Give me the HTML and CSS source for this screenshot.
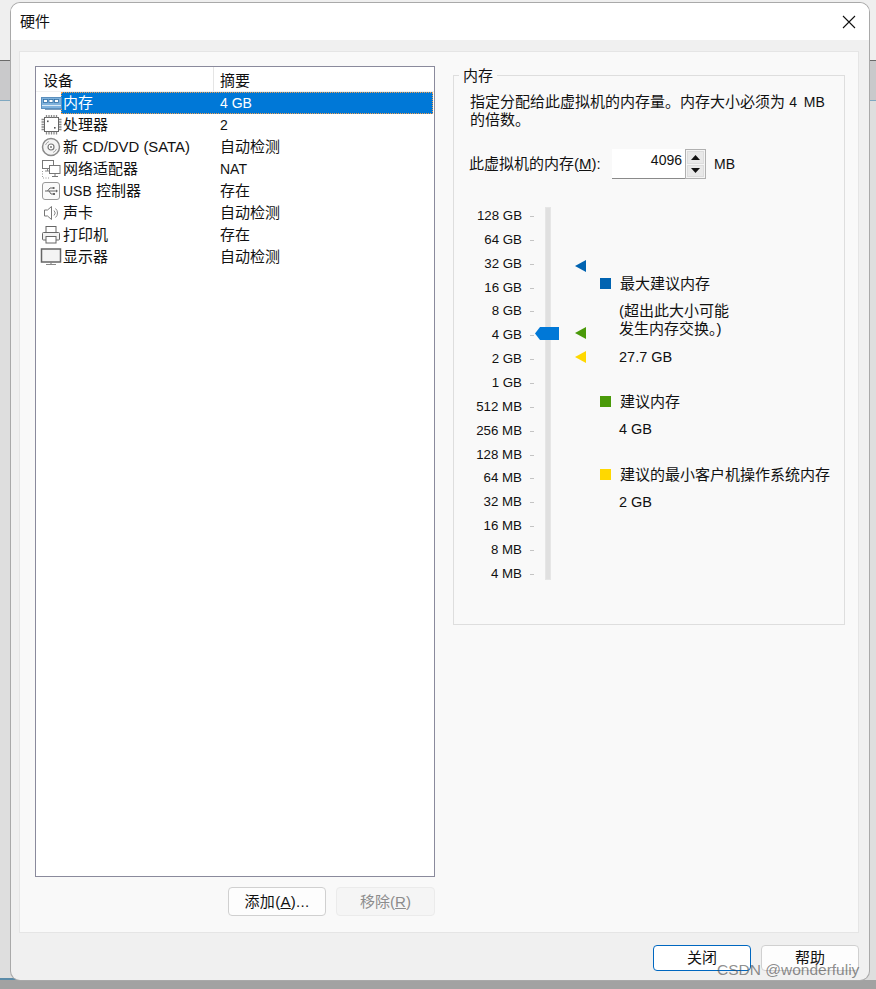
FILE: index.html
```html
<!DOCTYPE html>
<html lang="zh-CN">
<head>
<meta charset="utf-8">
<title>硬件</title>
<link rel="stylesheet" href="styles.css">
</head>
<body>
<div class="backdrop"><i class="bd-line-dark"></i><i class="bd-line-blue"></i><i class="bd-line-foot"></i><i class="bd-bottom"></i></div>
<div class="dialog">
  <header class="titlebar">
    <span class="title">硬件</span>
    <svg class="close-x" width="14" height="14" viewBox="0 0 14 14"><path d="M1 1L13 13M13 1L1 13" stroke="#111" stroke-width="1.1" fill="none"/></svg>
  </header>
  <div class="dialog-body">
    <div class="panel">
      <section class="left">
        <div class="list">
          <div class="list-head"><span class="col-device">设备</span><span class="col-summary">摘要</span></div>
          <div class="row selected">
            <svg class="icon" width="22" height="22" viewBox="0 0 22 22"><rect x="1.500" y="5.500" width="20" height="11" fill="#7fb2dc" stroke="#5b8fbd"/><rect x="3.500" y="7.500" width="4" height="3" fill="#fff" stroke="#2f6ea5" stroke-width=".8"/><rect x="9" y="7.500" width="4" height="3" fill="#fff" stroke="#2f6ea5" stroke-width=".8"/><rect x="14.500" y="7.500" width="4" height="3" fill="#fff" stroke="#2f6ea5" stroke-width=".8"/><path d="M2 13.500H21" stroke="#dcebf7"/><path d="M5 17.500H21" stroke="#7a9cbc"/></svg>
            <span class="name"><span class="sel-text">内存</span></span><span class="summary lat">4 GB</span>
          </div>
          <div class="row">
            <svg class="icon" width="22" height="22" viewBox="0 0 22 22"><rect x="4.500" y="3.500" width="14" height="14" fill="#fff" stroke="#666"/><path d="M1.500 5.500H4M1.500 8H4M1.500 10.500H4M1.500 13H4M1.500 15.500H4M19 5.500H21.500M19 8H21.500M19 10.500H21.500M19 13H21.500M19 15.500H21.500M6.500 1V3.500M9 1V3.500M11.500 1V3.500M14 1V3.500M16.500 1V3.500M6.500 18V20.500M9 18V20.500M11.500 18V20.500M14 18V20.500M16.500 18V20.500" stroke="#8a8a8a" stroke-width="1.300" fill="none"/><rect x="7" y="6.500" width="1.600" height="1.600" fill="#555"/><rect x="14" y="13" width="1.600" height="1.600" fill="#555"/></svg>
            <span class="name">处理器</span><span class="summary lat">2</span>
          </div>
          <div class="row">
            <svg class="icon" width="22" height="22" viewBox="0 0 22 22"><circle cx="11" cy="11" r="8.500" fill="#f4f4f4" stroke="#8a8a8a" stroke-width="1.500"/><circle cx="11" cy="11" r="3" fill="#fff" stroke="#777" stroke-width="1.200"/><circle cx="11" cy="11" r="1" fill="#777"/><path d="M5.500 9A6 6 0 0 1 9 5.500M16.500 13A6 6 0 0 1 13 16.500" stroke="#aaa" fill="none"/></svg>
            <span class="name">新 <span class="wide">CD/DVD (SATA)</span></span><span class="summary">自动检测</span>
          </div>
          <div class="row">
            <svg class="icon" width="22" height="22" viewBox="0 0 22 22"><rect x="2.500" y="2.500" width="11" height="8" fill="#fff" stroke="#777"/><path d="M7.500 10.500V13M5 13H9" stroke="#888" fill="none"/><rect x="9.500" y="7.500" width="10.500" height="8" fill="#fff" stroke="#777"/><path d="M15 15.500V18.500M12 18.500H18" stroke="#777" fill="none"/><path d="M2.500 13V20H10" stroke="#999" stroke-dasharray="1 1.500" fill="none"/></svg>
            <span class="name">网络适配器</span><span class="summary lat">NAT</span>
          </div>
          <div class="row">
            <svg class="icon" width="22" height="22" viewBox="0 0 22 22"><rect x="2.500" y="2.500" width="17" height="17" rx="2.500" fill="#fafafa" stroke="#999"/><path d="M5 11H16M7.500 11L10 8H12.500M9 11L11 14H13" stroke="#666" fill="none"/><path d="M16 9.500V12.500L18 11Z" fill="#666"/><rect x="12.500" y="7" width="2" height="2" fill="#666"/><rect x="13" y="13" width="2" height="2" fill="#666"/></svg>
            <span class="name"><span class="lat">USB</span> 控制器</span><span class="summary">存在</span>
          </div>
          <div class="row">
            <svg class="icon" width="22" height="22" viewBox="0 0 22 22"><path d="M4.500 8H7.500L11.500 4.500V17.500L7.500 14H4.500Z" fill="#fff" stroke="#777"/><path d="M14 8.500A3.500 3.500 0 0 1 14 13.500M15.500 6.500A6 6 0 0 1 15.500 15.500" stroke="#888" fill="none"/></svg>
            <span class="name">声卡</span><span class="summary">自动检测</span>
          </div>
          <div class="row">
            <svg class="icon" width="22" height="22" viewBox="0 0 22 22"><rect x="6" y="2.500" width="10" height="6" fill="#fff" stroke="#666"/><rect x="2.500" y="8.500" width="17" height="7.500" rx="1" fill="#f2f2f2" stroke="#666"/><rect x="6" y="12.500" width="10" height="6.500" fill="#fff" stroke="#666"/></svg>
            <span class="name">打印机</span><span class="summary">存在</span>
          </div>
          <div class="row">
            <svg class="icon" width="22" height="22" viewBox="0 0 22 22"><rect x="1.500" y="3" width="19" height="13" fill="#f4f4f4" stroke="#666" stroke-width="1.500"/><path d="M11 16V18M6 18.500H16" stroke="#888" stroke-width="1.200" fill="none"/></svg>
            <span class="name">显示器</span><span class="summary">自动检测</span>
          </div>
        </div>
        <div class="list-actions">
          <button class="btn add" type="button">添加(<u>A</u>)...</button>
          <button class="btn removed" type="button" disabled>移除(<u>R</u>)</button>
        </div>
      </section>
      <section class="right">
        <div class="group">
          <span class="legend">内存</span>
          <p class="desc">指定分配给此虚拟机的内存量。内存大小必须为 <span class="lat spaced">4 MB</span><br>的倍数。</p>
          <div class="mem-row">
            <span class="mem-label">此虚拟机的内存(<u>M</u>):</span>
            <span class="spin">
              <span class="spin-value">4096</span>
              <span class="spin-btns">
                <span class="spin-btn"><svg width="9" height="5" viewBox="0 0 9 5"><path d="M4.500 0L9 5H0Z" fill="#111"/></svg></span>
                <span class="spin-btn"><svg width="9" height="5" viewBox="0 0 9 5"><path d="M4.500 5L9 0H0Z" fill="#111"/></svg></span>
              </span>
            </span>
            <span class="mem-unit">MB</span>
          </div>
          <div class="graph">
            <div class="scale">
              <div class="tick">128 GB</div><div class="tick">64 GB</div><div class="tick">32 GB</div><div class="tick">16 GB</div>
              <div class="tick">8 GB</div><div class="tick">4 GB</div><div class="tick">2 GB</div><div class="tick">1 GB</div>
              <div class="tick">512 MB</div><div class="tick">256 MB</div><div class="tick">128 MB</div><div class="tick">64 MB</div>
              <div class="tick">32 MB</div><div class="tick">16 MB</div><div class="tick">8 MB</div><div class="tick">4 MB</div>
            </div>
            <div class="track-col">
              <div class="track"></div>
              <svg class="thumb" width="24" height="13" viewBox="0 0 24 13"><path d="M0 6.500L5 0H24V13H5Z" fill="#0078d7"/></svg>
              <svg class="marker m-max" width="12" height="12" viewBox="0 0 12 12"><path d="M0 6L11 0V12Z" fill="#0063b1"/></svg>
              <svg class="marker m-rec" width="12" height="12" viewBox="0 0 12 12"><path d="M0 6L11 0V12Z" fill="#4a9a0a"/></svg>
              <svg class="marker m-min" width="12" height="12" viewBox="0 0 12 12"><path d="M0 6L11 0V12Z" fill="#ffd800"/></svg>
            </div>
            <div class="key">
              <div class="key-title first"><i class="sw blue"></i>最大建议内存</div>
              <p class="key-note">(超出此大小可能<br>发生内存交换。)</p>
              <p class="key-val v1">27.7 GB</p>
              <div class="key-title second"><i class="sw green"></i>建议内存</div>
              <p class="key-val v2">4 GB</p>
              <div class="key-title third"><i class="sw yellow"></i>建议的最小客户机操作系统内存</div>
              <p class="key-val v2">2 GB</p>
            </div>
          </div>
        </div>
      </section>
    </div>
    <footer class="dialog-actions">
      <button class="btn close primary" type="button">关闭</button>
      <button class="btn close" type="button">帮助</button>
    </footer>
  </div>
</div>
<div class="watermark">CSDN @wonderfuliy</div>
</body>
</html>
```

FILE: styles.css
```css
* { box-sizing: border-box; }
html, body { margin: 0; height: 100%; }
body {
  width: 876px;
  height: 989px;
  overflow: hidden;
  position: relative;
  background: #dcdcdc;
  padding: 3px 7px 0 11px;
  font: 15px/18px "Liberation Sans", "Noto Sans CJK SC", sans-serif;
  color: #111;
}
p { margin: 0; }
u { text-underline-offset: 1px; }
.lat { font-size: 14px; }
.wide { font-size: 14.900px; }
.spaced { word-spacing: 3px; }

.backdrop { position: absolute; inset: 0; background: linear-gradient(#efefef 0 60px, #c9c9cb 60px 101px, #dedede 101px); }
.backdrop i { position: absolute; left: 0; right: 0; display: block; }
.bd-line-dark { top: 60px; height: 1px; background: #6a6a6a; }
.bd-line-blue { top: 100px; height: 1px; background: #7fa8c0; }
.backdrop .bd-line-foot { top: 978px; right: auto; width: 16px; height: 2px; background: #5b8ba8; }
.bd-bottom { top: 980px; bottom: 0; background: #a2a2a2; }

.dialog {
  position: relative;
  width: 858px;
  height: 977px;
  display: flex;
  flex-direction: column;
  border-radius: 9px;
  overflow: hidden;
  background: #f0f0f0;
  box-shadow: 0 0 0 1px #a9a9a9;
}
.titlebar {
  height: 37px;
  flex: none;
  background: #fff;
  display: flex;
  align-items: center;
  justify-content: space-between;
  padding: 0 13px 0 9px;
}
.dialog-body { flex: 1; display: flex; flex-direction: column; padding: 11px 11px 9px 8px; }

.panel {
  width: 840px;
  height: 882px;
  flex: none;
  background: #f9f9f9;
  border: 1px solid #e5e5e5;
  display: flex;
  padding: 14px 13px 0 15px;
}
.left { width: 400px; flex: none; }
.list {
  height: 811px;
  background: #fff;
  border: 1px solid #8a8a9c;
}
.list-head { display: flex; height: 25px; align-items: center; border-bottom: 1px solid #f0f0f0; }
.col-device { width: 178px; padding-left: 7px; border-right: 1px solid #e5e5e5; height: 24px; line-height: 27px; }
.col-summary { padding-left: 6px; line-height: 27px; height: 24px; }
.row { display: flex; align-items: center; height: 22px; padding-left: 4px; position: relative; }
.icon { flex: none; width: 22px; height: 22px; margin-right: 1px; }
.name { width: 152px; flex: none; white-space: nowrap; }
.summary { padding-left: 5px; }
.selected { color: #fff; }
.selected::before {
  content: "";
  position: absolute;
  left: 25px;
  right: 1px;
  top: 0;
  bottom: 0;
  background: #0078d7;
  outline: 1px dotted #f0a050;
  outline-offset: -1px;
}
.selected .name, .selected .summary, .selected .icon { position: relative; }

.list-actions { display: flex; justify-content: flex-end; gap: 10px; margin-top: 10px; }
.btn {
  width: 98px;
  height: 29px;
  font: inherit;
  color: #111;
  background: #fdfdfd;
  border: 1px solid #d0d0d0;
  border-radius: 4px;
  padding: 0;
}
.btn.add { letter-spacing: .3px; }
.btn.removed { width: 99px; color: #8c8c8c; background: #f5f5f5; border-color: #ebebeb; }
.btn.close { height: 26px; }
.btn.primary { border-color: #0067c0; background: #fff; }

.right { margin-left: 18px; width: 392px; flex: none; padding-top: 9px; }
.group {
  position: relative;
  height: 550px;
  border: 1px solid #dedede;
  padding: 17px 10px 0 16px;
}
.legend { position: absolute; left: 5px; top: -9px; padding: 0 4px; background: #f9f9f9; }
.mem-row { display: flex; align-items: center; margin-top: 20px; height: 30px; }
.mem-label { width: 142px; flex: none; margin-left: -1px; padding-right: 0; }
.spin { display: flex; width: 94px; height: 30px; flex: none; margin-left: 1px; }
.spin-value {
  width: 73px;
  background: #fff;
  border-bottom: 1px solid #8a8a8a;
  text-align: right;
  padding: 2px 3px 0 0;
  font-size: 14px;
}
.spin-btns { width: 21px; display: flex; flex-direction: column; border: 1px solid #b0b0b0; padding: 1px; gap: 1px; background: #f5f5f5; }
.spin-btn { flex: 1; display: flex; align-items: center; justify-content: center; background: #e8e8e8; border: 1px solid #dcdcdc; }
.mem-unit { margin-left: 8px; font-size: 14px; }

.graph { display: flex; margin-top: 25px; position: relative; }
.scale { width: 66px; flex: none; margin-left: -2px; font-size: 13.300px; }
.tick { height: 23.870px; line-height: 24px; text-align: right; padding-right: 12px; position: relative; white-space: nowrap; }
.tick::after { content: ""; position: absolute; right: 0; top: 12px; width: 4px; height: 1px; background: #c4c4c4; }
.track-col { position: relative; width: 66px; flex: none; }
.track { position: absolute; left: 11px; top: 3px; width: 6px; height: 373px; background: #e0e0e0; border: 1px solid #e6e6e6; }
.thumb { position: absolute; left: 1px; top: 123px; }
.marker { position: absolute; left: 41px; }
.m-max { top: 56px; }
.m-rec { top: 123px; }
.m-min { top: 147px; }
.key { flex: none; width: 240px; white-space: nowrap; }
.key-title { position: relative; padding-left: 20px; }
.sw { position: absolute; left: 0; top: 3px; width: 11px; height: 11px; }
.blue { background: #0063b1; }
.green { background: #4a9a0a; }
.yellow { background: #ffd800; }
.first { margin-top: 71px; }
.key-note { margin: 9px 0 0 19px; }
.key-val { margin-left: 19px; font-size: 14.500px; }
.v1 { margin-top: 10px; }
.second { margin-top: 27px; }
.v2 { margin-top: 9px; }
.third { margin-top: 28px; }

.dialog-actions { display: flex; justify-content: flex-end; gap: 10px; padding: 12px 0 0; margin-right: -1px; }

.watermark {
  position: absolute;
  left: 717px;
  top: 961px;
  font-size: 15.500px;
  line-height: 18px;
  color: rgba(70, 70, 70, .62);
  white-space: nowrap;
}
```
